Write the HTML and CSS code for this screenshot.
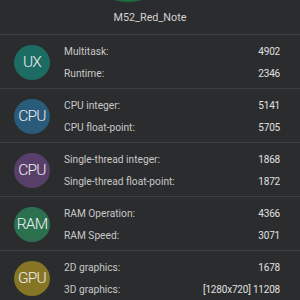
FILE: index.html
```html
<!DOCTYPE html>
<html>
<head>
<meta charset="utf-8">
<link rel="stylesheet" href="styles.css">
</head>
<body>
<div class="app">
  <header class="header">
    <div class="logo"></div>
    <div class="title">M52_Red_Note</div>
  </header>
  <section class="group">
    <div class="badge ux">UX</div>
    <div class="rows">
      <div class="row"><span>Multitask:</span><span class="val">4902</span></div>
      <div class="row"><span>Runtime:</span><span class="val">2346</span></div>
    </div>
  </section>
  <section class="group">
    <div class="badge cpu">CPU</div>
    <div class="rows">
      <div class="row"><span>CPU integer:</span><span class="val">5141</span></div>
      <div class="row"><span>CPU float-point:</span><span class="val">5705</span></div>
    </div>
  </section>
  <section class="group">
    <div class="badge cpu2">CPU</div>
    <div class="rows">
      <div class="row"><span>Single-thread integer:</span><span class="val">1868</span></div>
      <div class="row"><span>Single-thread float-point:</span><span class="val">1872</span></div>
    </div>
  </section>
  <section class="group">
    <div class="badge ram">RAM</div>
    <div class="rows">
      <div class="row"><span>RAM Operation:</span><span class="val">4366</span></div>
      <div class="row"><span>RAM Speed:</span><span class="val">3071</span></div>
    </div>
  </section>
  <section class="group">
    <div class="badge gpu">GPU</div>
    <div class="rows">
      <div class="row"><span>2D graphics:</span><span class="val">1678</span></div>
      <div class="row"><span>3D graphics:</span><span class="val">[1280x720] 11208</span></div>
    </div>
  </section>
</div>
</body>
</html>
```
FILE: styles.css
```css
html, body {
  margin: 0;
  padding: 0;
  background: #2b2c2e;
  overflow: hidden;
}
body {
  font-family: Roboto, "Liberation Sans", sans-serif;
  color: #c8c8c8;
}
.app {
  width: 300px;
}
.header {
  position: relative;
  height: 34px;
  border-bottom: 1px solid #3e3f41;
  display: flex;
  align-items: center;
  justify-content: center;
}
.logo {
  position: absolute;
  left: 78px;
  top: -98px;
  width: 100px;
  height: 100px;
  border-radius: 50%;
  background: #1d6d3c;
}
.title {
  font-size: 10.8px;
  color: #d2d2d2;
  padding-top: 1px;
}
.group {
  height: 53px;
  border-bottom: 1px solid #3e3f41;
  display: flex;
  align-items: center;
  padding-left: 14px;
  padding-right: 20px;
  box-sizing: content-box;
}
.badge {
  width: 36px;
  height: 35px;
  border-radius: 50%;
  flex: none;
  display: flex;
  align-items: center;
  justify-content: center;
  font-size: 15.5px;
  font-weight: 300;
  color: #f0f0f0;
  margin-top: 1px;
  letter-spacing: -0.8px;
}
.ux { background: #1d6c64; }
.cpu { background: #2a5b7b; }
.cpu2 { background: #583f6a; }
.ram { background: #2b7150; }
.gpu { background: #857525; }
.rows {
  flex: 1;
  margin-left: 14px;
  display: flex;
  flex-direction: column;
  align-self: flex-start;
  padding-top: 6px;
}
.row {
  height: 22px;
  line-height: 22px;
  display: flex;
  justify-content: space-between;
  font-size: 10.2px;
}
.val {
  color: #e0e0e0;
  font-size: 10px;
  letter-spacing: -0.2px;
}
```
